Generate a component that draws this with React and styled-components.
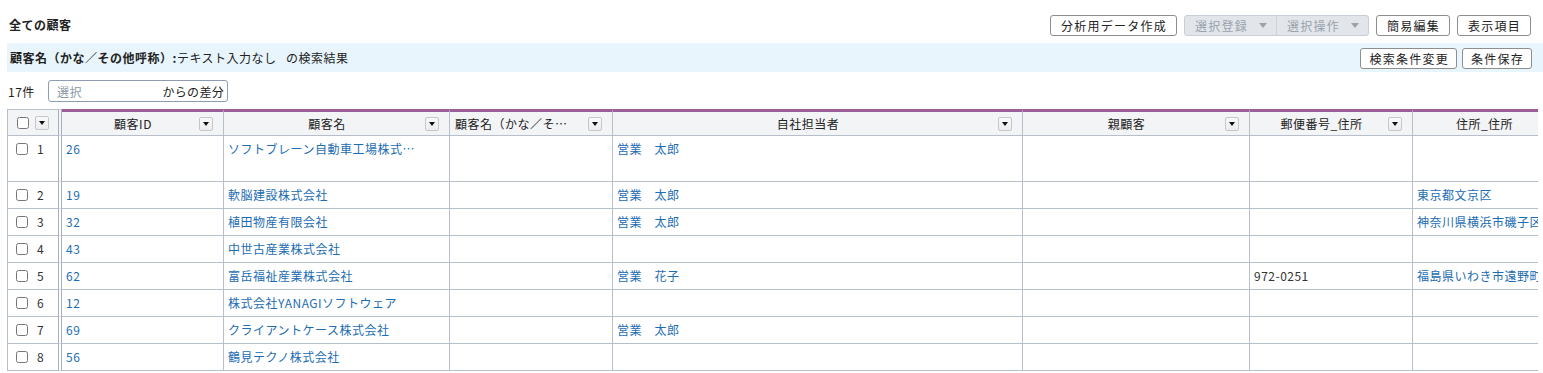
import React from 'react';
import styled, { createGlobalStyle } from 'styled-components';

const GlobalStyle = createGlobalStyle`
    body {
        margin: 0;
        background: #fff;
        color: #222;
        font-family: "Noto Sans CJK JP", "Noto Sans", sans-serif;
        font-size: 12px;
        letter-spacing: 0.5px;
    }
`

const columns = [
    { key: 'id', label: '顧客ID', width: 162 },
    { key: 'name', label: '顧客名', width: 226 },
    { key: 'kana', label: '顧客名（かな／そ…', width: 163, left: true },
    { key: 'staff', label: '自社担当者', width: 410 },
    { key: 'parent', label: '親顧客', width: 227 },
    { key: 'zip', label: '郵便番号_住所', width: 163, plain: true },
    { key: 'addr', label: '住所_住所', width: 163 },
]

const rows = [
    { no: 1, id: '26', name: 'ソフトブレーン自動車工場株式…', staff: '営業　太郎', tall: true },
    { no: 2, id: '19', name: '軟脳建設株式会社', staff: '営業　太郎', addr: '東京都文京区' },
    { no: 3, id: '32', name: '植田物産有限会社', staff: '営業　太郎', addr: '神奈川県横浜市磯子区' },
    { no: 4, id: '43', name: '中世古産業株式会社' },
    { no: 5, id: '62', name: '富岳福祉産業株式会社', staff: '営業　花子', zip: '972-0251', addr: '福島県いわき市遠野町' },
    { no: 6, id: '12', name: '株式会社YANAGIソフトウェア' },
    { no: 7, id: '69', name: 'クライアントケース株式会社', staff: '営業　太郎' },
    { no: 8, id: '56', name: '鶴見テクノ株式会社' },
]

function App() {
    return (
        <Page>
            <GlobalStyle />
            <TopBar>
                <Title>全ての顧客</Title>
                <Actions>
                    <Button>分析用データ作成</Button>
                    <ButtonGroup>
                        <GroupItem>選択登録<Caret /></GroupItem>
                        <GroupItem>選択操作<Caret /></GroupItem>
                    </ButtonGroup>
                    <Button>簡易編集</Button>
                    <Button>表示項目</Button>
                </Actions>
            </TopBar>

            <SearchBar>
                <SearchText>
                    <strong>顧客名（かな／その他呼称）:</strong>テキスト入力なし&nbsp;&nbsp;&nbsp;の検索結果
                </SearchText>
                <SearchActions>
                    <Button $compact>検索条件変更</Button>
                    <Button $compact>条件保存</Button>
                </SearchActions>
            </SearchBar>

            <CountRow>
                <Count>17件</Count>
                <DiffBox>
                    <DiffInput placeholder='選択' />
                    <DiffLabel>からの差分</DiffLabel>
                </DiffBox>
            </CountRow>

            <TableWrap>
                <HeaderRow>
                    <HeadSelect>
                        <Check type='checkbox' />
                        <Dropdown />
                    </HeadSelect>
                    {columns.map(col => (
                        <HeadCell key={col.key} $width={col.width}>
                            <HeadLabel $left={col.left}>{col.label}</HeadLabel>
                            <Dropdown />
                        </HeadCell>
                    ))}
                </HeaderRow>
                {rows.map(row => (
                    <DataRow key={row.no} $tall={row.tall}>
                        <SelectCell>
                            <Check type='checkbox' />
                            <RowNo>{row.no}</RowNo>
                        </SelectCell>
                        {columns.map(col => (
                            <Cell key={col.key} $width={col.width} $plain={col.plain}>
                                {row[col.key]}
                            </Cell>
                        ))}
                    </DataRow>
                ))}
            </TableWrap>
        </Page>
    )
}

export default App

const Page = styled.div`
    padding: 0 11px 0 7px;
    height: 373px;
    overflow: hidden;
`

const TopBar = styled.div`
    display: flex;
    align-items: center;
    justify-content: space-between;
    height: 21px;
    padding: 15px 1px 0 2px;
    margin-bottom: 7px;
`

const Title = styled.div`
    font-weight: bold;
    margin-top: -3px;
`

const Actions = styled.div`
    display: flex;
    gap: 7px;
`

const Button = styled.button`
    height: 21px;
    padding: ${p => (p.$compact ? '0 7px 0 8px' : '0 9px 0 10px')};
    background: #fff;
    border: 1px solid #8e8e8e;
    border-radius: 3px;
    font-family: inherit;
    font-size: 12px;
    letter-spacing: 1.25px;
    color: #222;
    line-height: 19px;
`

const ButtonGroup = styled.div`
    display: flex;
    height: 21px;
    box-sizing: border-box;
    border: 1px solid #c8ced6;
    border-radius: 3px;
    background: #e2e6eb;
    overflow: hidden;
`

const GroupItem = styled.div`
    display: flex;
    align-items: center;
    padding: 0 9px 0 10px;
    color: #9aa2ac;
    letter-spacing: 1.25px;
    & + & {
        border-left: 1px solid #cdd2d9;
    }
`

const Caret = styled.span`
    margin-left: 11px;
    width: 0;
    height: 0;
    border-left: 4px solid transparent;
    border-right: 4px solid transparent;
    border-top: 5px solid #9aa2ac;
`

const SearchBar = styled.div`
    display: flex;
    align-items: center;
    justify-content: space-between;
    height: 29px;
    margin-right: -11px;
    padding: 0 11px 0 3px;
    background: #e8f5fc;
`

const SearchText = styled.div`
    strong {
        font-weight: bold;
    }
`

const SearchActions = styled.div`
    display: flex;
    gap: 5px;
    margin-top: 1px;
`

const CountRow = styled.div`
    display: flex;
    align-items: center;
    height: 22px;
    margin-top: 8px;
`

const Count = styled.div`
    width: 40px;
    padding-left: 1px;
`

const DiffBox = styled.div`
    display: flex;
    align-items: center;
    box-sizing: border-box;
    width: 180px;
    height: 22px;
    padding: 0 3px 0 8px;
    border: 1px solid #8d9cb0;
    border-radius: 3px;
`

const DiffInput = styled.input`
    flex: 1;
    min-width: 0;
    border: none;
    outline: none;
    padding: 0;
    font-family: inherit;
    font-size: 12px;
    letter-spacing: 0.5px;
    &::placeholder {
        color: #8b97a4;
    }
`

const DiffLabel = styled.span`
    color: #222;
    letter-spacing: 0.3px;
`

const TableWrap = styled.div`
    width: 1530px;
    margin-top: 7px;
    border-left: 1px solid #b8bfcc;
    overflow: hidden;
`

const HeaderRow = styled.div`
    display: flex;
    height: 27px;
`

const HeadBase = styled.div`
    flex: none;
    display: flex;
    align-items: center;
    box-sizing: border-box;
    height: 100%;
    background: #f3f4f6;
    border-bottom: 1px solid #b8bfcc;
`

const HeadSelect = styled(HeadBase)`
    width: 54px;
    padding-left: 9px;
    gap: 6px;
    border-top: 1px solid #b8bfcc;
    border-right: 4px double #a7afbe;
`

const HeadCell = styled(HeadBase)`
    width: ${p => p.$width}px;
    padding: 0 10px 0 5px;
    border-top: 3px solid #9c5e98;
    border-right: 1px solid #b8bfcc;
`

const HeadLabel = styled.div`
    flex: 1;
    min-width: 0;
    text-align: ${p => (p.$left ? 'left' : 'center')};
    white-space: nowrap;
    overflow: hidden;
    color: #222;
`

const Dropdown = styled.span`
    flex: none;
    position: relative;
    box-sizing: border-box;
    width: 14px;
    height: 14px;
    border: 1px solid #c4c8ce;
    border-radius: 2px;
    background: linear-gradient(#fafafa, #ececec);
    &::after {
        content: '';
        position: absolute;
        left: 2.5px;
        top: 4.5px;
        border-left: 3.5px solid transparent;
        border-right: 3.5px solid transparent;
        border-top: 4px solid #111;
    }
`

const DataRow = styled.div`
    display: flex;
    height: ${p => (p.$tall ? 46 : 27)}px;
`

const CellBase = styled.div`
    flex: none;
    box-sizing: border-box;
    height: 100%;
    padding-top: 4px;
    line-height: 17px;
    border-bottom: 1px solid #b8bfcc;
    white-space: nowrap;
    overflow: hidden;
`

const SelectCell = styled(CellBase)`
    display: flex;
    align-items: flex-start;
    width: 54px;
    padding-left: 8px;
    border-right: 4px double #a7afbe;
`

const Check = styled.input`
    width: 12px;
    height: 12px;
    margin: 2.5px 9px 0 0;
    ${HeadSelect} & {
        margin: 0;
    }
`

const RowNo = styled.span`
    color: #333;
`

const Cell = styled(CellBase)`
    width: ${p => p.$width}px;
    padding-left: 4px;
    border-right: 1px solid #b8bfcc;
    color: ${p => (p.$plain ? '#333' : '#1d6db3')};
`
